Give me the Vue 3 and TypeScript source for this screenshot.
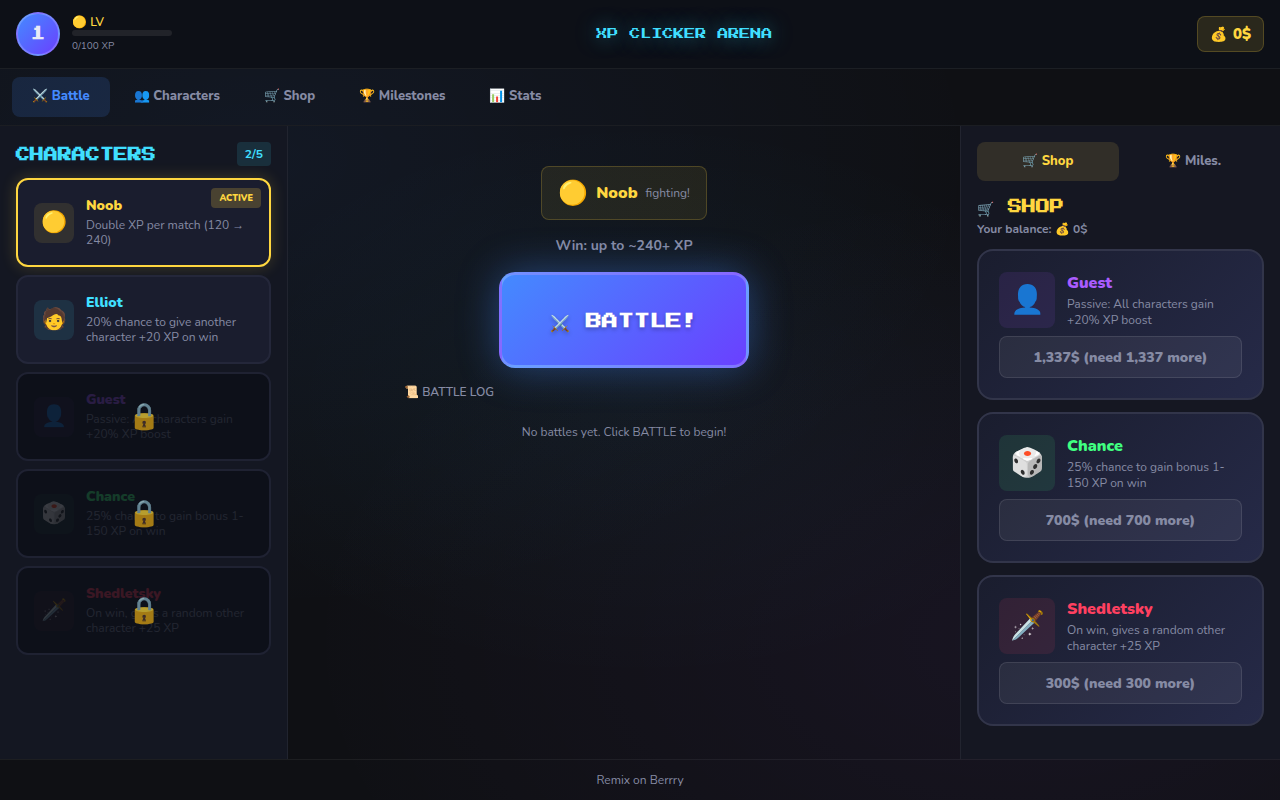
<script setup lang="ts">
import { ref } from 'vue'

interface Character {
  id: string
  name: string
  icon: string
  description: string
  owned: boolean
  price: number
}

const level = ref(1)
const xp = ref(0)
const xpNeeded = 100
const balance = ref(0)
const activeTab = ref('battle')
const sideTab = ref('shop')
const activeId = ref('noob')

const tabs = [
  { id: 'battle', label: '⚔️ Battle' },
  { id: 'characters', label: '👥 Characters' },
  { id: 'shop', label: '🛒 Shop' },
  { id: 'milestones', label: '🏆 Milestones' },
  { id: 'stats', label: '📊 Stats' },
]

const characters: Character[] = [
  { id: 'noob', name: 'Noob', icon: '🟡', description: 'Double XP per match (120 → 240)', owned: true, price: 0 },
  { id: 'elliot', name: 'Elliot', icon: '🧑', description: '20% chance to give another character +20 XP on win', owned: true, price: 0 },
  { id: 'guest', name: 'Guest', icon: '👤', description: 'Passive: All characters gain +20% XP boost', owned: false, price: 1337 },
  { id: 'chance', name: 'Chance', icon: '🎲', description: '25% chance to gain bonus 1-150 XP on win', owned: false, price: 700 },
  { id: 'shedletsky', name: 'Shedletsky', icon: '🗡️', description: 'On win, gives a random other character +25 XP', owned: false, price: 300 },
]

const owned = characters.filter((c) => c.owned)
const forSale = characters.filter((c) => !c.owned)

function money(value: number): string {
  return value.toLocaleString('en-US')
}
</script>

<template>
  <div class="game">
    <header class="top">
      <div class="player">
        <div class="level">{{ level }}</div>
        <div class="progress">
          <span class="lv">🟡 LV</span>
          <div class="bar" role="progressbar" aria-label="Experience" :aria-valuenow="xp" :aria-valuemax="xpNeeded">
            <div class="fill" :style="{ width: (xp / xpNeeded) * 100 + '%' }"></div>
          </div>
          <span class="xp">{{ xp }}/{{ xpNeeded }} XP</span>
        </div>
      </div>
      <h1 class="title">XP CLICKER ARENA</h1>
      <div class="wallet"><span class="bag">💰</span> {{ balance }}$</div>
    </header>

    <nav class="tabs">
      <button
        v-for="tab in tabs"
        :key="tab.id"
        type="button"
        class="tab"
        :class="{ on: activeTab === tab.id }"
        @click="activeTab = tab.id"
      >{{ tab.label }}</button>
    </nav>

    <div class="columns">
      <aside class="roster">
        <div class="roster-head">
          <h2 class="heading cyan">CHARACTERS</h2>
          <span class="count">{{ owned.length }}/{{ characters.length }}</span>
        </div>
        <article
          v-for="c in characters"
          :key="c.id"
          class="card"
          :class="[c.id, { active: c.id === activeId, locked: !c.owned }]"
        >
          <div class="portrait">{{ c.icon }}</div>
          <div class="about">
            <h3 class="name">{{ c.name }}</h3>
            <p class="desc">{{ c.description }}</p>
          </div>
          <span v-if="c.id === activeId" class="badge">ACTIVE</span>
          <div v-if="!c.owned" class="lock">🔒</div>
        </article>
      </aside>

      <main class="arena">
        <div class="fighter">
          <span class="fighter-icon">🟡</span>
          <span class="fighter-name">Noob</span>
          <span class="fighter-state">fighting!</span>
        </div>
        <p class="reward">Win: up to ~240+ XP</p>
        <button type="button" class="battle">⚔️ BATTLE!</button>
        <section class="log">
          <h2 class="log-title">📜 BATTLE LOG</h2>
          <p class="log-empty">No battles yet. Click BATTLE to begin!</p>
        </section>
      </main>

      <aside class="store">
        <div class="store-tabs">
          <button type="button" class="store-tab" :class="{ on: sideTab === 'shop' }" @click="sideTab = 'shop'">🛒 Shop</button>
          <button type="button" class="store-tab" :class="{ on: sideTab === 'miles' }" @click="sideTab = 'miles'">🏆 Miles.</button>
        </div>
        <h2 class="heading gold">🛒 SHOP</h2>
        <p class="balance">Your balance: 💰 {{ balance }}$</p>
        <article v-for="c in forSale" :key="c.id" class="offer" :class="c.id">
          <div class="offer-top">
            <div class="portrait large">{{ c.icon }}</div>
            <div class="about">
              <h3 class="name">{{ c.name }}</h3>
              <p class="desc">{{ c.description }}</p>
            </div>
          </div>
          <button type="button" class="buy">{{ money(c.price) }}$ (need {{ money(c.price - balance) }} more)</button>
        </article>
      </aside>
    </div>

    <footer class="foot"><a href="#">Remix on Berrry</a></footer>
  </div>
</template>

<style>
body {
  margin: 0;
  background: #0f1014;
}
</style>

<style scoped>
.game {
  --gold: #ffd740;
  --cyan: #40dfff;
  --muted: #868ba4;
  --line: rgba(255, 255, 255, 0.06);
  --pixel: "Press Start 2P", "DejaVu Sans Mono", monospace;
  display: flex;
  flex-direction: column;
  min-height: 100vh;
  color: #e8eaf6;
  font-family: Nunito, "Noto Sans", "Open Sans", sans-serif;
  background:
    radial-gradient(ellipse at 20% 20%, rgba(68, 138, 255, 0.07), transparent 50%),
    radial-gradient(ellipse at 80% 80%, rgba(170, 90, 255, 0.06), transparent 50%),
    radial-gradient(ellipse at 50% 50%, rgba(64, 223, 255, 0.04), transparent 50%),
    #0f1014;
}
.game * {
  box-sizing: border-box;
}
h1, h2, h3, p {
  margin: 0;
}
button {
  font-family: inherit;
  cursor: pointer;
}

.top {
  display: flex;
  align-items: center;
  justify-content: space-between;
  padding: 12px 16px;
  border-bottom: 1px solid #1c1f24;
  background: #0d1017;
}
.player {
  display: flex;
  align-items: center;
  gap: 12px;
}
.level {
  display: grid;
  place-items: center;
  width: 44px;
  height: 44px;
  border: 2px solid rgba(255, 255, 255, 0.2);
  border-radius: 50%;
  background: linear-gradient(135deg, #448aff, #6a40ff);
  font-family: var(--pixel);
  font-size: 14px;
  font-weight: 700;
}
.progress {
  display: flex;
  flex-direction: column;
}
.lv {
  color: var(--gold);
  font-size: 12px;
  font-weight: 600;
  line-height: 16px;
}
.bar {
  width: 100px;
  height: 6px;
  overflow: hidden;
  border-radius: 3px;
  background: #212329;
}
.fill {
  height: 100%;
  background: var(--gold);
}
.xp {
  margin-top: 2px;
  color: var(--muted);
  font-size: 10px;
  line-height: 16px;
}
.title {
  color: var(--cyan);
  font-family: var(--pixel);
  font-size: 11px;
  font-weight: 400;
  line-height: 20px;
  text-shadow: 0 0 20px rgba(64, 223, 255, 0.5);
}
.wallet {
  display: flex;
  align-items: center;
  gap: 6px;
  height: 36px;
  padding: 0 12px;
  border: 1px solid rgba(255, 215, 64, 0.2);
  border-radius: 8px;
  background: rgba(255, 215, 64, 0.12);
  color: var(--gold);
  font-size: 15px;
  font-weight: 900;
}
.bag {
  font-size: 14px;
}

.tabs {
  display: flex;
  gap: 4px;
  padding: 8px 12px;
  border-bottom: 1px solid #1b1d22;
}
.tab {
  height: 40px;
  padding: 0 20px 2px;
  border: 0;
  border-radius: 8px;
  background: transparent;
  color: var(--muted);
  font-size: 13px;
  font-weight: 800;
}
.tab.on {
  background: rgba(68, 138, 255, 0.15);
  color: #448aff;
}

.columns {
  display: grid;
  flex: 1;
  grid-template-columns: 288px minmax(0, 1fr) 320px;
}
.roster {
  display: flex;
  flex-direction: column;
  gap: 8px;
  padding: 16px;
  border-right: 1px solid var(--line);
  background: #141722;
}
.roster-head {
  display: flex;
  align-items: center;
  justify-content: space-between;
  margin-bottom: 4px;
}
.heading {
  font-family: var(--pixel);
  font-size: 14px;
  font-weight: 700;
  line-height: 28px;
}
.roster-head .heading {
  padding-top: 2px;
  line-height: 22px;
}
.cyan {
  color: var(--cyan);
}
.gold {
  color: var(--gold);
}
.count {
  padding: 4px 8px;
  border-radius: 4px;
  background: rgba(64, 223, 255, 0.12);
  color: var(--cyan);
  font-size: 12px;
  font-weight: 700;
  line-height: 16px;
}
.card {
  position: relative;
  display: flex;
  align-items: center;
  gap: 12px;
  min-height: 89px;
  padding: 16px;
  border: 2px solid #24273a;
  border-radius: 12px;
  background: #1a1d2e;
}
.card.active {
  border-color: var(--gold);
  box-shadow: 0 0 16px rgba(255, 215, 64, 0.2);
}
.card.locked {
  opacity: 0.7;
}
.portrait {
  display: grid;
  flex: none;
  place-items: center;
  width: 40px;
  height: 40px;
  border-radius: 8px;
  background: var(--tint);
  font-size: 21px;
  line-height: 1;
}
.large {
  width: 56px;
  height: 56px;
  font-size: 28px;
}
.noob { --hue: #ffd740; --tint: rgba(255, 215, 64, 0.1); }
.elliot { --hue: #40dfff; --tint: rgba(64, 223, 255, 0.1); }
.guest { --hue: #aa5cff; --tint: rgba(170, 92, 255, 0.1); }
.chance { --hue: #40ff80; --tint: rgba(64, 255, 128, 0.1); }
.shedletsky { --hue: #ff4060; --tint: rgba(255, 64, 96, 0.1); }
.about {
  min-width: 0;
}
.card .about {
  align-self: flex-start;
}
.name {
  margin-bottom: 2px;
  color: var(--hue);
  font-size: 14px;
  font-weight: 900;
  line-height: 20px;
}
.desc {
  color: var(--muted);
  font-size: 12px;
  line-height: 15px;
}
.badge {
  position: absolute;
  top: 8px;
  right: 8px;
  padding: 0 8px;
  border-radius: 4px;
  background: #494231;
  color: var(--gold);
  font-size: 9px;
  font-weight: 900;
  line-height: 20px;
}
.lock {
  position: absolute;
  inset: 0;
  display: grid;
  place-items: center;
  border-radius: 10px;
  background: rgba(6, 8, 14, 0.72);
  font-size: 26px;
  line-height: 32px;
}

.arena {
  display: flex;
  flex-direction: column;
  align-items: center;
  padding: 40px 16px 16px;
}
.fighter {
  display: flex;
  align-items: center;
  gap: 8px;
  height: 54px;
  padding: 0 16px;
  border: 1px solid rgba(255, 215, 64, 0.2);
  border-radius: 8px;
  background: rgba(255, 215, 64, 0.08);
}
.fighter-icon {
  font-size: 24px;
}
.fighter-name {
  color: var(--gold);
  font-size: 16px;
  font-weight: 900;
}
.fighter-state {
  color: var(--muted);
  font-size: 12px;
}
.reward {
  margin: 16px 0;
  color: var(--muted);
  font-size: 14px;
  font-weight: 700;
  line-height: 20px;
}
.battle {
  width: 250px;
  height: 96px;
  padding: 6px 0 0;
  border: 3px solid rgba(255, 255, 255, 0.2);
  border-radius: 16px;
  background: linear-gradient(135deg, #448aff, #6a40ff);
  box-shadow: 0 0 40px rgba(68, 138, 255, 0.4);
  color: #fff;
  font-family: var(--pixel);
  font-size: 16px;
  font-weight: 700;
  text-shadow: 0 2px 4px rgba(0, 0, 0, 0.3);
}
.log {
  width: 100%;
  max-width: 440px;
  margin-top: 16px;
}
.log-title {
  color: var(--muted);
  font-size: 12px;
  font-weight: 600;
  line-height: 16px;
}
.log-empty {
  margin-top: 24px;
  color: var(--muted);
  font-size: 12px;
  line-height: 16px;
  text-align: center;
}

.store {
  padding: 16px;
  border-left: 1px solid var(--line);
  background: #151722;
}
.store-tabs {
  display: grid;
  grid-template-columns: 1fr 1fr;
  gap: 4px;
  margin-bottom: 12px;
}
.store-tab {
  height: 39px;
  padding: 0 8px 2px;
  border: 0;
  border-radius: 8px;
  background: transparent;
  color: var(--muted);
  font-size: 13px;
  font-weight: 800;
}
.store-tab.on {
  background: #312e28;
  color: var(--gold);
}
.balance {
  margin-bottom: 12px;
  color: var(--muted);
  font-size: 12px;
  font-weight: 700;
  line-height: 16px;
}
.offer {
  margin-bottom: 12px;
  padding: 20px;
  border: 2px solid #32354a;
  border-radius: 16px;
  background: linear-gradient(135deg, #1a1d2e, #262a48);
}
.offer-top {
  display: flex;
  align-items: center;
  gap: 12px;
  margin-bottom: 8px;
}
.offer .name {
  margin: 0;
  font-size: 16px;
  line-height: 25px;
}
.offer .desc {
  line-height: 16px;
}
.buy {
  width: 100%;
  height: 42px;
  border: 1px solid rgba(255, 255, 255, 0.1);
  border-radius: 8px;
  background: rgba(255, 255, 255, 0.06);
  color: var(--muted);
  font-size: 14px;
  font-weight: 900;
}

.foot {
  display: flex;
  align-items: center;
  justify-content: center;
  height: 41px;
  border-top: 1px solid var(--line);
  font-size: 12px;
}
.foot a {
  color: var(--muted);
  text-decoration: none;
}
</style>
